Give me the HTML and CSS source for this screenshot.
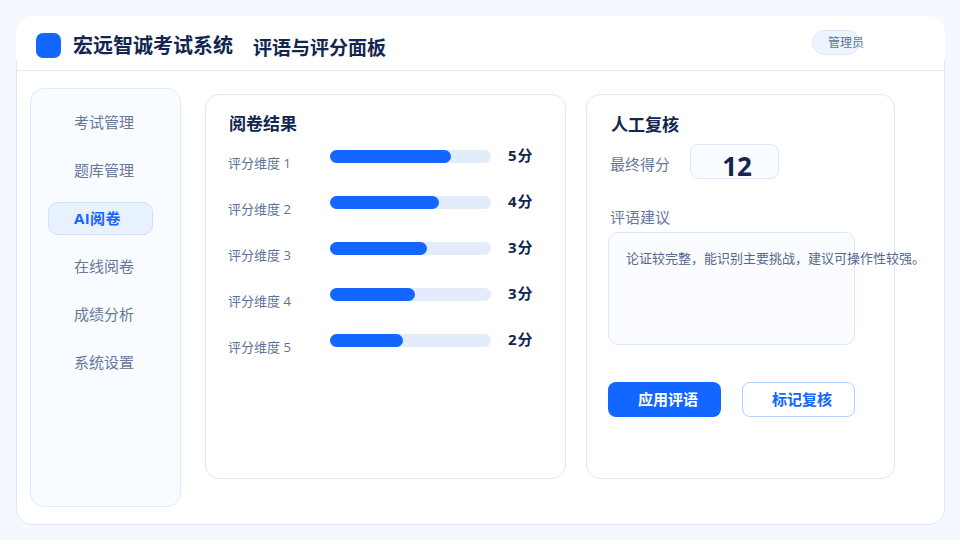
FILE: index.html
```html
<!DOCTYPE html>
<html lang="zh-CN">
<head>
<meta charset="UTF-8">
<meta name="viewport" content="width=device-width, initial-scale=1.0">
<title>评语与评分面板</title>
<link rel="stylesheet" href="styles.css">
</head>
<body>
<div class="app">
  <header class="topbar">
    <div class="logo"></div>
    <div class="brand">宏远智诚考试系统</div>
    <div class="page-title">评语与评分面板</div>
    <div class="role">管理员</div>
  </header>
  <div class="top-rule"></div>
  <div class="content">
    <nav class="sidebar">
      <a class="nav-item">考试管理</a>
      <a class="nav-item">题库管理</a>
      <a class="nav-item active">AI阅卷</a>
      <a class="nav-item">在线阅卷</a>
      <a class="nav-item">成绩分析</a>
      <a class="nav-item">系统设置</a>
    </nav>
    <section class="card results">
      <h2 class="card-title">阅卷结果</h2>
      <div class="score-row">
        <span class="dim">评分维度 1</span>
        <div class="track"><div class="fill" style="width: 75%"></div></div>
        <span class="points">5分</span>
      </div>
      <div class="score-row">
        <span class="dim">评分维度 2</span>
        <div class="track"><div class="fill" style="width: 68%"></div></div>
        <span class="points">4分</span>
      </div>
      <div class="score-row">
        <span class="dim">评分维度 3</span>
        <div class="track"><div class="fill" style="width: 60%"></div></div>
        <span class="points">3分</span>
      </div>
      <div class="score-row">
        <span class="dim">评分维度 4</span>
        <div class="track"><div class="fill" style="width: 53%"></div></div>
        <span class="points">3分</span>
      </div>
      <div class="score-row">
        <span class="dim">评分维度 5</span>
        <div class="track"><div class="fill" style="width: 45.5%"></div></div>
        <span class="points">2分</span>
      </div>
    </section>
    <section class="card review">
      <h2 class="card-title">人工复核</h2>
      <div class="final">
        <span class="final-label">最终得分</span>
        <div class="final-score">12</div>
      </div>
      <div class="comment-label">评语建议</div>
      <div class="comment-box">论证较完整，能识别主要挑战，建议可操作性较强。</div>
      <div class="actions">
        <button class="btn primary">应用评语</button>
        <button class="btn ghost">标记复核</button>
      </div>
    </section>
  </div>
</div>
</body>
</html>
```

FILE: styles.css
```css
* {
  box-sizing: border-box;
}

body {
  margin: 0;
  width: 960px;
  height: 540px;
  padding: 16px 15px 15px 16px;
  background: #f5f9ff;
  font-family: "Open Sans", "Noto Sans CJK SC", sans-serif;
  color: #12264f;
  overflow: hidden;
}

.app {
  height: 509px;
  background: #fff;
  border: 1px solid #dbe8fb;
  border-radius: 16px;
}

.topbar {
  display: flex;
  align-items: flex-start;
  height: 44px;
  margin: -1px -1px 0;
  padding: 17px 20px 0;
  background: #fff;
  border-radius: 16px 16px 0 0;
}

.top-rule {
  height: 1px;
  margin-top: 10px;
  background: #e4edfb;
}

.logo {
  width: 25px;
  height: 25px;
  border-radius: 7px;
  background: #1366ff;
}

.brand {
  margin-left: 12px;
  font-size: 20px;
  line-height: 26px;
  font-weight: 700;
}

.page-title {
  margin-left: 20px;
  margin-top: 2px;
  font-size: 19px;
  line-height: 26px;
  font-weight: 700;
}

.role {
  margin-left: auto;
  margin-right: 65px;
  margin-top: -3px;
  width: 48px;
  height: 25px;
  padding-left: 15px;
  line-height: 23px;
  font-size: 12px;
  white-space: nowrap;
  color: #5d7299;
  background: #eef4fe;
  border: 1px solid #dbe8fb;
  border-radius: 13px;
}

.content {
  display: flex;
  align-items: flex-start;
  padding: 17px 0 0 13px;
}

.sidebar {
  width: 151px;
  height: 419px;
  padding: 17px 17px;
  background: #f8fbff;
  border: 1px solid #dfeafc;
  border-radius: 14px;
}

.nav-item {
  display: block;
  height: 33px;
  margin-bottom: 15px;
  padding-left: 26px;
  line-height: 33px;
  font-size: 15px;
  color: #66799c;
}

.nav-item.active {
  width: 105px;
  padding-left: 25px;
  font-weight: 700;
  letter-spacing: 0.4px;
  color: #1366ff;
  background: #e8f1ff;
  border: 1px solid #cfe0fb;
  border-radius: 10px;
  line-height: 31px;
}

.card {
  height: 385px;
  margin-top: 6px;
  background: #fff;
  border: 1px solid #dbe8fb;
  border-radius: 14px;
}

.card-title {
  margin: 0 0 14px 1px;
  font-size: 17px;
  line-height: 24px;
  font-weight: 700;
}

.results {
  width: 361px;
  margin-left: 24px;
  padding: 17px 22px;
}

.score-row {
  display: flex;
  align-items: flex-start;
  height: 46px;
}

.dim {
  width: 102px;
  margin-top: 3px;
  font-size: 13px;
  line-height: 20px;
  color: #5d7299;
}

.track {
  width: 161px;
  height: 13px;
  background: #e2ecfb;
  border-radius: 7px;
}

.fill {
  height: 100%;
  background: #1366ff;
  border-radius: 7px;
}

.points {
  margin-left: 17px;
  font-size: 15px;
  font-weight: 700;
  letter-spacing: 1px;
  line-height: 10px;
}

.review {
  width: 309px;
  margin-left: 20px;
  padding: 18px 21px;
}

.review .card-title {
  margin: 0 0 7px 3px;
}

.final {
  display: flex;
  align-items: center;
}

.final-label {
  margin-left: 2px;
  padding-top: 4px;
  font-size: 15px;
  line-height: 20px;
  color: #66799c;
}

.final-score {
  width: 89px;
  height: 35px;
  margin-left: 20px;
  padding-left: 5px;
  line-height: 42px;
  text-align: center;
  font-size: 26px;
  font-weight: 700;
  background: #f8fbff;
  border: 1px solid #dbe8fb;
  border-radius: 8px;
}

.comment-label {
  margin: 28px 0 5px 2px;
  font-size: 15px;
  line-height: 20px;
  color: #66799c;
}

.comment-box {
  width: 247px;
  height: 113px;
  padding: 15px 17px;
  font-size: 13px;
  line-height: 20px;
  white-space: nowrap;
  color: #56688c;
  background: #fbfcff;
  border: 1px solid #dbe8fb;
  border-radius: 10px;
}

.actions {
  display: flex;
  gap: 21px;
  margin-top: 37px;
}

.btn {
  width: 113px;
  height: 35px;
  padding: 0 0 2px 7px;
  font-family: inherit;
  font-size: 15px;
  font-weight: 700;
  border-radius: 8px;
}

.primary {
  color: #fff;
  background: #1366ff;
  border: none;
}

.ghost {
  color: #1366ff;
  background: #fff;
  border: 1px solid #b4d0ff;
}
```
